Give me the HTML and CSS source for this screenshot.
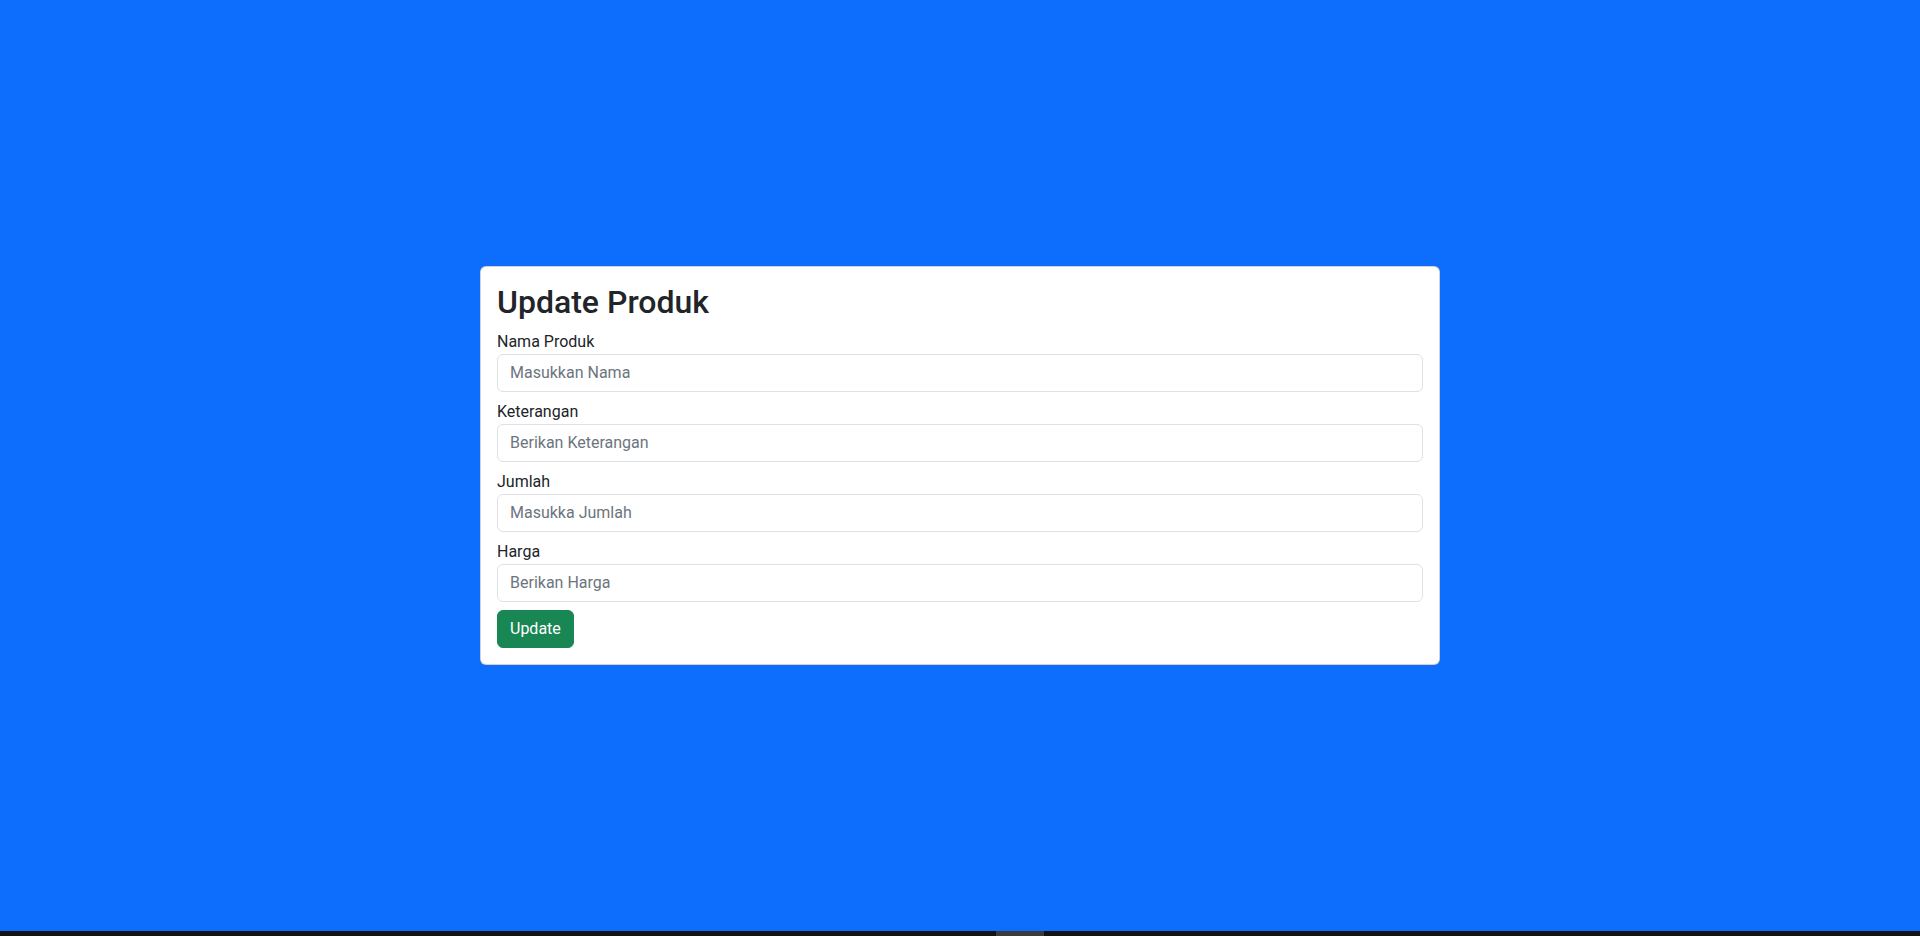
FILE: index.html
```html
<!DOCTYPE html>
<html lang="id">

<head>
    <meta charset="UTF-8">
    <title>Update Produk</title>
    <link rel="stylesheet" href="styles.css">
</head>

<body>
    <!-- form update -->
    <div class="page">
        <div class="card">
            <form class="card-body">
                <h2 class="title">Update Produk</h2>
                <label for="nama">Nama Produk</label>
                <input type="text" id="nama" name="nama" class="form-control" placeholder="Masukkan Nama">
                <label for="keterangan">Keterangan</label>
                <input type="text" id="keterangan" name="keterangan" class="form-control" placeholder="Berikan Keterangan">
                <label for="jumlah">Jumlah</label>
                <input type="text" id="jumlah" name="jumlah" class="form-control" placeholder="Masukka Jumlah">
                <label for="harga">Harga</label>
                <input type="text" id="harga" name="harga" class="form-control" placeholder="Berikan Harga">
                <div><button type="button" class="btn-update">Update</button></div>
            </form>
        </div>
    </div>
    <!-- /form update -->
    <div class="scrollbar"><div class="thumb"></div></div>
</body>

</html>
```

FILE: styles.css
```css
* {
    margin: 0;
    padding: 0;
    box-sizing: border-box;
}

body {
    height: 100vh;
    display: flex;
    flex-direction: column;
    background-color: #0d6efd;
    color: #212529;
    font-family: Roboto, 'Noto Sans', Arial, sans-serif;
    font-size: 16px;
    line-height: 1.5;
}

.page {
    flex: 1;
    display: flex;
    align-items: center;
    justify-content: center;
}

.card {
    width: 960px;
    background-color: white;
    border: 1px solid rgba(0, 0, 0, 0.175);
    border-radius: 6px;
}

.card-body {
    padding: 16px;
    display: flex;
    flex-direction: column;
}

.title {
    font-size: 32px;
    font-weight: 500;
    line-height: 1.2;
    margin-bottom: 8px;
}

label {
    display: block;
}

.form-control {
    display: block;
    width: 100%;
    height: 38px;
    padding: 6px 12px;
    margin-bottom: 8px;
    font-family: inherit;
    font-size: 16px;
    color: #212529;
    border: 1px solid #dee2e6;
    border-radius: 6px;
    outline: none;
}

.form-control::placeholder {
    color: #6c757d;
}

.btn-update {
    height: 38px;
    padding: 6px 12px;
    font-family: inherit;
    font-size: 16px;
    color: white;
    background-color: #198754;
    border: 1px solid #198754;
    border-radius: 6px;
}

.scrollbar {
    height: 5px;
    background-color: #131313;
    padding-left: 996px;
}

.thumb {
    width: 48px;
    height: 5px;
    background-color: #3b3b3b;
}
```
